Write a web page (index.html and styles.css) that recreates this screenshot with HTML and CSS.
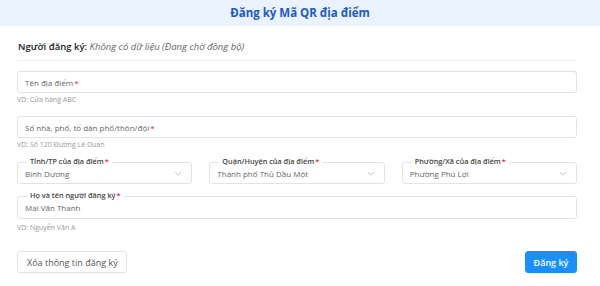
FILE: index.html
```html
<!DOCTYPE html>
<html lang="vi">
<head>
<meta charset="utf-8">
<link rel="stylesheet" href="styles.css">
</head>
<body>
<header class="hdr">Đăng ký Mã QR địa điểm</header>
<main class="form">
  <div class="owner"><b>Người đăng ký:</b> <i>Không có dữ liệu (Đang chờ đồng bộ)</i></div>
  <div class="sep"></div>

  <div class="field first">
    <div class="box"><span class="ph">Tên địa điểm<span class="req">*</span></span></div>
    <div class="hint">VD: Cửa hàng ABC</div>
  </div>

  <div class="field">
    <div class="box"><span class="ph">Số nhà, phố, tổ dân phố/thôn/đội<span class="req">*</span></span></div>
    <div class="hint">VD: Số 120 Đường Lê Duẩn</div>
  </div>

  <div class="selects">
    <div class="box sel">
      <span class="lbl">Tỉnh/TP của địa điểm<span class="req">*</span></span>
      <span class="val">Bình Dương</span>
      <svg class="chev" viewBox="0 0 10 6" width="8" height="5"><path d="M1 1l4 4 4-4" fill="none" stroke="#bbb" stroke-width="1"/></svg>
    </div>
    <div class="box sel">
      <span class="lbl">Quận/Huyện của địa điểm<span class="req">*</span></span>
      <span class="val">Thành phố Thủ Dầu Một</span>
      <svg class="chev" viewBox="0 0 10 6" width="8" height="5"><path d="M1 1l4 4 4-4" fill="none" stroke="#bbb" stroke-width="1"/></svg>
    </div>
    <div class="box sel">
      <span class="lbl">Phường/Xã của địa điểm<span class="req">*</span></span>
      <span class="val">Phường Phú Lợi</span>
      <svg class="chev" viewBox="0 0 10 6" width="8" height="5"><path d="M1 1l4 4 4-4" fill="none" stroke="#bbb" stroke-width="1"/></svg>
    </div>
  </div>

  <div class="field name">
    <div class="box">
      <span class="lbl">Họ và tên người đăng ký<span class="req">*</span></span>
      <span class="val">Mai Văn Thanh</span>
    </div>
    <div class="hint">VD: Nguyễn Văn A</div>
  </div>

  <div class="actions">
    <button class="btn">Xóa thông tin đăng ký</button>
    <button class="btn primary">Đăng ký</button>
  </div>
</main>
</body>
</html>
```

FILE: styles.css
```css
* { box-sizing: border-box; }
html, body { margin: 0; padding: 0; background: #fff; }
body { font-family: "Open Sans", "Noto Sans", sans-serif; color: #333; width: 600px; }

.hdr {
  height: 26px;
  background: #eaf2fd;
  color: #1c5bc3;
  font-weight: 700;
  font-size: 11.5px;
  text-align: center;
  line-height: 25px;
}

.form { padding: 0 23px 0 17px; }

.owner {
  padding-top: 14px;
  height: 34px;
  font-size: 9.5px;
  line-height: 13px;
  padding-left: 1px;
  color: #222;
}
.owner b { font-weight: 600; }
.owner i { color: #666; }

.sep { height: 1px; background: #f0f0f0; }

.field.first { margin-top: 10px; }

.box {
  position: relative;
  height: 22px;
  border: 1px solid #e3e3e3;
  border-radius: 3px;
  display: flex;
  align-items: center;
  padding: 0 7px;
  font-size: 8px;
  background: #fff;
}
.ph { color: #666; }
.req { color: #e8262d; margin-left: 1px; }
.hint {
  font-size: 7px;
  color: #999;
  height: 23px;
  line-height: 13px;
}

.selects {
  display: grid;
  grid-template-columns: repeat(3, 1fr);
  column-gap: 17px;
  margin-top: 1px;
}
.sel { padding-right: 9px; }
.val { color: #666; flex: 1; white-space: nowrap; overflow: hidden; }
.chev { flex: none; }

.lbl {
  position: absolute;
  left: 9px;
  top: -7px;
  background: #fff;
  padding: 0 3px;
  font-size: 7.3px;
  line-height: 11px;
  font-weight: 600;
  color: #444;
  white-space: nowrap;
}

.field.name { margin-top: 12px; }
.field.name .box { height: 23px; }
.field.name .hint { height: 32px; line-height: 15px; padding-top: 1px; }

.actions {
  display: flex;
  justify-content: space-between;
}
.btn {
  height: 22px;
  font-family: inherit;
  font-size: 9px;
  border: 1px solid #e3e3e3;
  border-radius: 3px;
  background: #fff;
  color: #555;
  padding: 0 9px;
  width: 110px;
  white-space: nowrap;
}
.btn.primary {
  width: 52px;
  background: #1890ff;
  border-color: #1890ff;
  color: #fff;
  font-weight: 600;
  padding: 0;
}
```
